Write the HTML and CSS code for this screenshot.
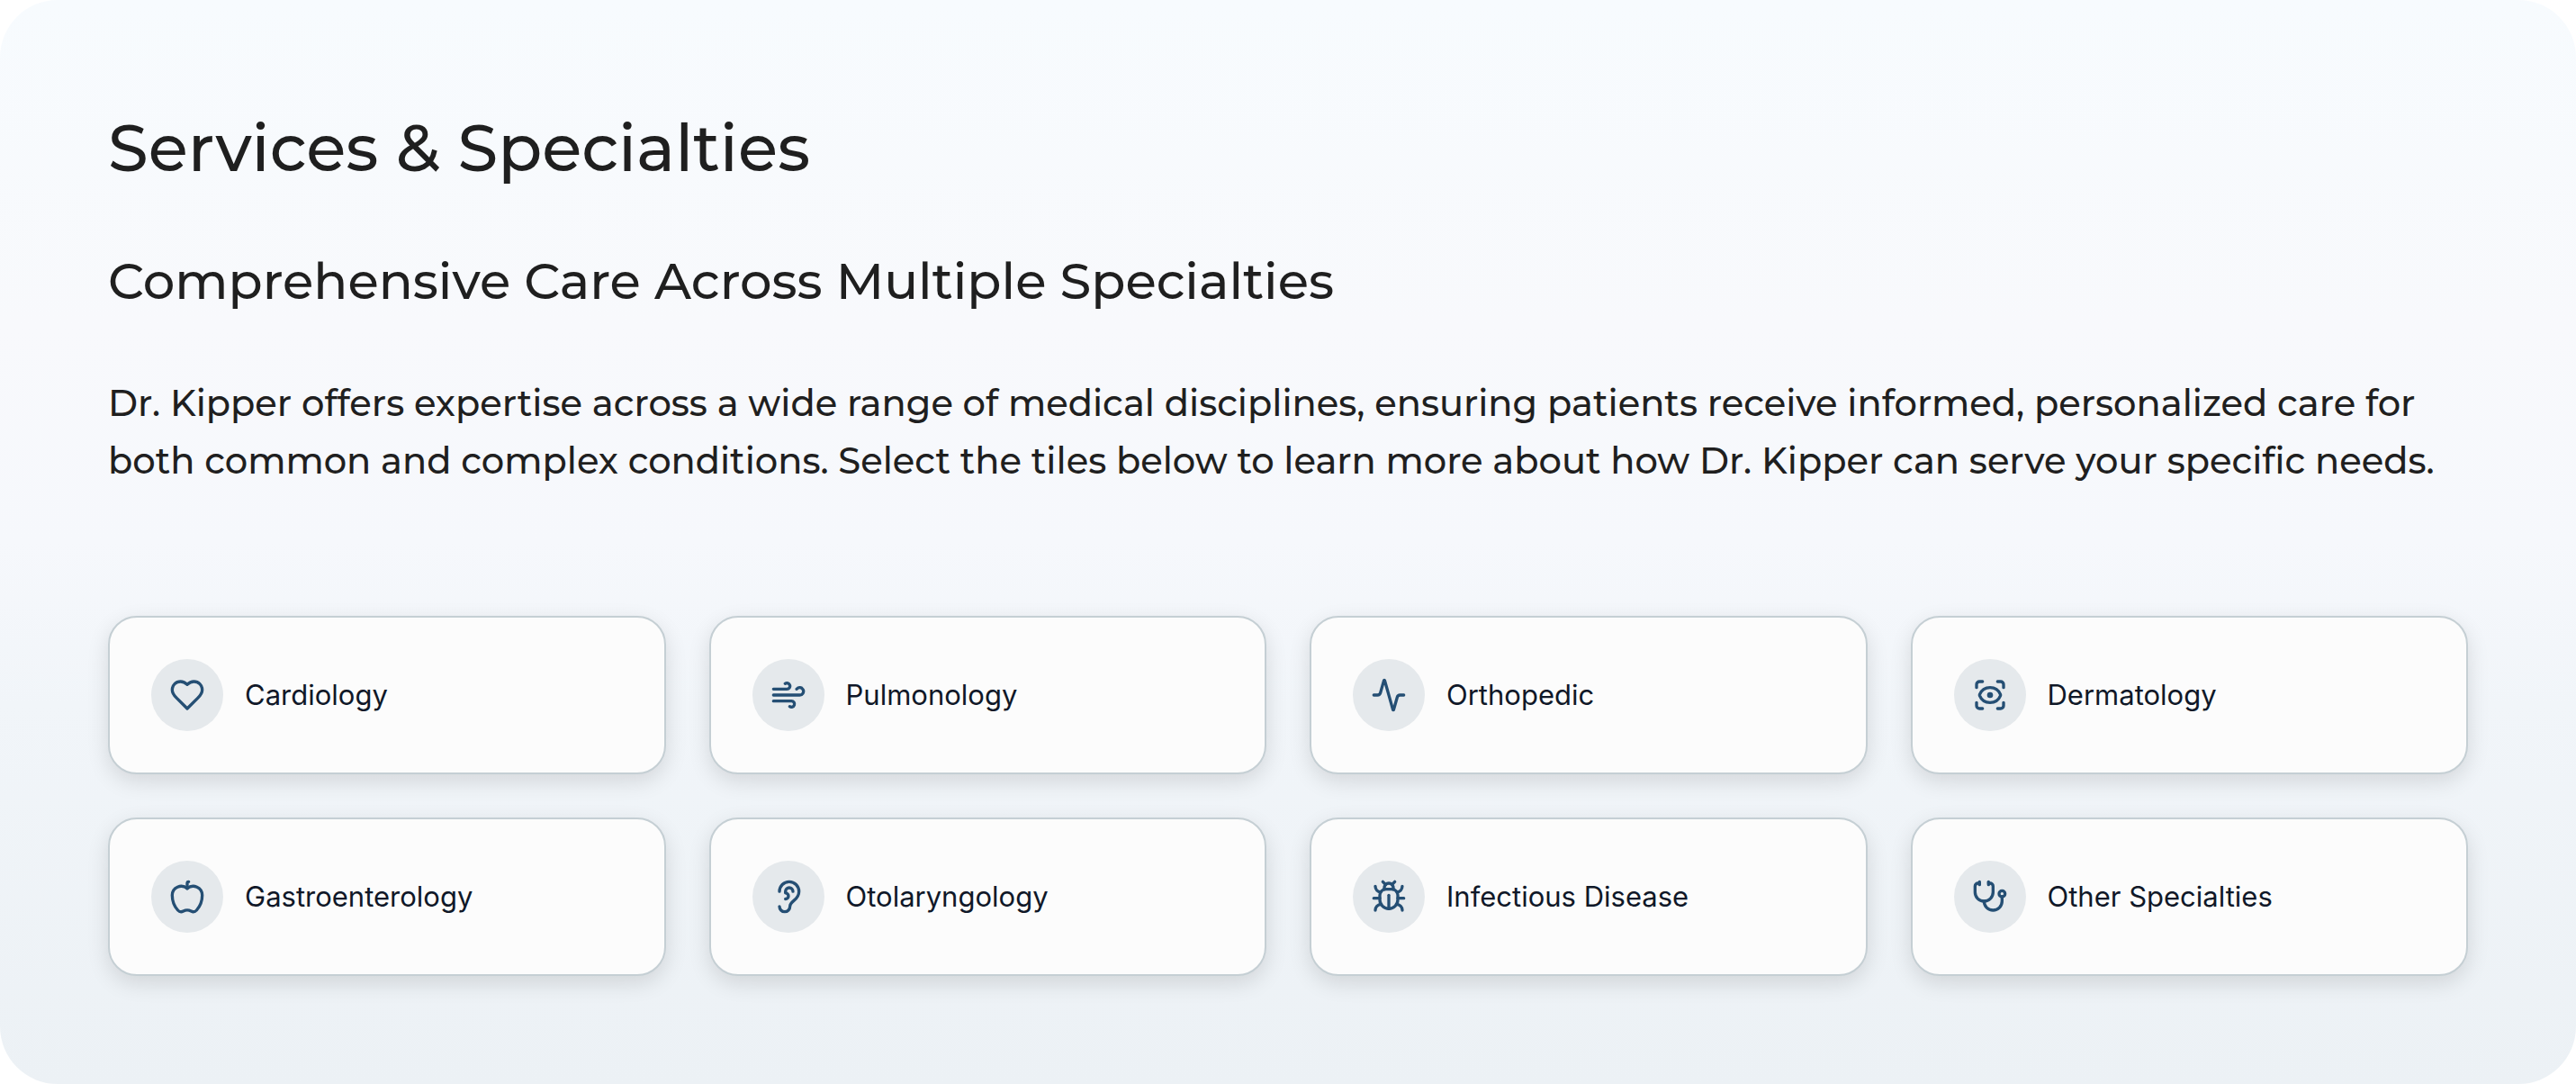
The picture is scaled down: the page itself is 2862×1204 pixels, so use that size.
FILE: index.html
```
<!DOCTYPE html>
<html lang="en">
<head>
<meta charset="utf-8">
<title>Services &amp; Specialties</title>
<link rel="stylesheet" href="styles.css">
</head>
<body>
<section class="services">
  <header class="intro">
    <h1 class="title">Services &amp; Specialties</h1>
    <h2 class="subtitle">Comprehensive Care Across Multiple Specialties</h2>
    <p class="lead">Dr. Kipper offers expertise across a wide range of medical disciplines, ensuring patients receive informed, personalized care for both common and complex conditions. Select the tiles below to learn more about how Dr. Kipper can serve your specific needs.</p>
  </header>
  <nav class="tiles" aria-label="Specialties">
    <a class="tile" href="#cardiology">
      <span class="badge"><svg class="icon" viewBox="0 0 24 24" aria-hidden="true"><path d="M19 14c1.49-1.46 3-3.21 3-5.5A5.5 5.5 0 0 0 16.500 3c-1.760 0-3 .5-4.500 2-1.500-1.500-2.740-2-4.500-2A5.500 5.500 0 0 0 2 8.500c0 2.300 1.500 4.050 3 5.500l7 7Z"/></svg></span>
      <span class="label">Cardiology</span>
    </a>
    <a class="tile" href="#pulmonology">
      <span class="badge"><svg class="icon" viewBox="0 0 24 24" aria-hidden="true"><path d="M12.800 19.600A2 2 0 1 0 14 16H2"/><path d="M17.500 8a2.500 2.500 0 1 1 2 4H2"/><path d="M9.800 4.400A2 2 0 1 1 11 8H2"/></svg></span>
      <span class="label">Pulmonology</span>
    </a>
    <a class="tile" href="#orthopedic">
      <span class="badge"><svg class="icon" viewBox="0 0 24 24" aria-hidden="true"><path d="M22 12h-2.480a2 2 0 0 0-1.930 1.460l-2.350 8.360a.25.25 0 0 1-.48 0L9.240 2.180a.25.25 0 0 0-.48 0l-2.350 8.360A2 2 0 0 1 4.490 12H2"/></svg></span>
      <span class="label">Orthopedic</span>
    </a>
    <a class="tile" href="#dermatology">
      <span class="badge"><svg class="icon" viewBox="0 0 24 24" aria-hidden="true"><path d="M3 7V5a2 2 0 0 1 2-2h2"/><path d="M17 3h2a2 2 0 0 1 2 2v2"/><path d="M21 17v2a2 2 0 0 1-2 2h-2"/><path d="M7 21H5a2 2 0 0 1-2-2v-2"/><circle cx="12" cy="12" r="1"/><path d="M18.944 12.330a1 1 0 0 0 0-.66 7.500 7.500 0 0 0-13.888 0 1 1 0 0 0 0 .66 7.500 7.500 0 0 0 13.888 0"/></svg></span>
      <span class="label">Dermatology</span>
    </a>
    <a class="tile" href="#gastroenterology">
      <span class="badge"><svg class="icon" viewBox="0 0 24 24" aria-hidden="true"><path d="M12 6.528V3a1 1 0 0 1 1-1"/><path d="M18.237 21A15 15 0 0 0 22 11a6 6 0 0 0-10-4.472A6 6 0 0 0 2 11a15.100 15.100 0 0 0 3.763 10 3 3 0 0 0 3.648.648 5.500 5.500 0 0 1 5.178 0A3 3 0 0 0 18.237 21"/></svg></span>
      <span class="label">Gastroenterology</span>
    </a>
    <a class="tile" href="#otolaryngology">
      <span class="badge"><svg class="icon" viewBox="0 0 24 24" aria-hidden="true"><path d="M6 8.500a6.500 6.500 0 1 1 13 0c0 6-6 6-6 10a3.500 3.500 0 1 1-7 0"/><path d="M15 8.500a2.500 2.500 0 0 0-5 0v1a2 2 0 1 1 0 4"/></svg></span>
      <span class="label">Otolaryngology</span>
    </a>
    <a class="tile" href="#infectious-disease">
      <span class="badge"><svg class="icon" viewBox="0 0 24 24" aria-hidden="true"><path d="m8 2 1.880 1.880"/><path d="M14.120 3.880 16 2"/><path d="M9 7.130v-1a3.003 3.003 0 1 1 6 0v1"/><path d="M12 20c-3.300 0-6-2.700-6-6v-3a4 4 0 0 1 4-4h4a4 4 0 0 1 4 4v3c0 3.300-2.700 6-6 6"/><path d="M12 20v-9"/><path d="M6.530 9C4.600 8.800 3 7.100 3 5"/><path d="M6 13H2"/><path d="M3 21c0-2.100 1.700-3.900 3.800-4"/><path d="M20.970 5c0 2.100-1.600 3.800-3.500 4"/><path d="M22 13h-4"/><path d="M17.200 17c2.100.1 3.800 1.900 3.800 4"/></svg></span>
      <span class="label">Infectious Disease</span>
    </a>
    <a class="tile" href="#other">
      <span class="badge"><svg class="icon" viewBox="0 0 24 24" aria-hidden="true"><path d="M11 2v2"/><path d="M5 2v2"/><path d="M5 3H4a2 2 0 0 0-2 2v4a6 6 0 0 0 12 0V5a2 2 0 0 0-2-2h-1"/><path d="M8 15a6 6 0 0 0 12 0v-3"/><circle cx="20" cy="10" r="2"/></svg></span>
      <span class="label">Other Specialties</span>
    </a>
  </nav>
</section>
</body>
</html>
```
FILE: styles.css
```
* {
  box-sizing: border-box;
}

body {
  margin: 0;
  background: #ffffff;
}

.services {
  padding: 120px;
  border-radius: 64px;
  background: linear-gradient(180deg, #f7fbfe 0%, #f8f9fc 30%, #f6f8fc 50%, #f1f5f9 65%, #ecf1f5 100%);
}

.intro {
  display: flex;
  flex-direction: column;
  gap: 64px;
  margin-bottom: 140px;
  color: #1f1f1f;
  font-family: Montserrat, "DejaVu Sans", sans-serif;
}

.title,
.subtitle,
.lead {
  margin: 0;
  font-weight: 500;
}

.title {
  font-size: 72px;
  line-height: 88px;
}

.subtitle {
  font-size: 56px;
  line-height: 80px;
}

.lead {
  font-size: 40px;
  line-height: 64px;
}

.tiles {
  display: grid;
  grid-template-columns: repeat(4, 1fr);
  gap: 48px;
}

.tile {
  display: flex;
  align-items: center;
  gap: 24px;
  padding: 46px;
  border: 2px solid #c5cfd4;
  border-radius: 32px;
  background: #fcfcfc;
  box-shadow: 0 8px 24px rgba(0, 0, 0, 0.12);
  color: #101828;
  font-family: Inter, sans-serif;
  font-size: 31px;
  font-weight: 400;
  line-height: 48px;
  text-decoration: none;
}

.badge {
  display: flex;
  flex: none;
  align-items: center;
  justify-content: center;
  width: 80px;
  height: 80px;
  border-radius: 50%;
  background: #e5e9ec;
}

.icon {
  width: 40px;
  height: 40px;
  fill: none;
  stroke: #254f74;
  stroke-width: 2;
  stroke-linecap: round;
  stroke-linejoin: round;
}
```
